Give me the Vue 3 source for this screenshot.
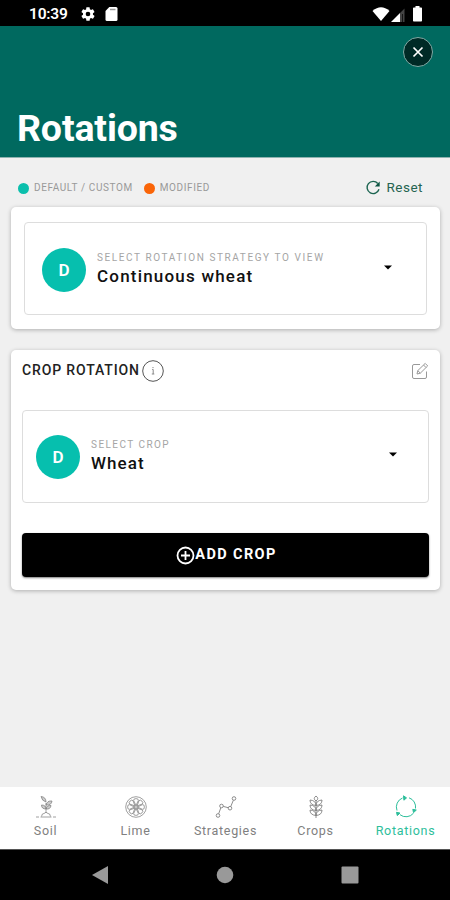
<script setup>
const tabs = [
  { id: 'soil', label: 'Soil' },
  { id: 'lime', label: 'Lime' },
  { id: 'strategies', label: 'Strategies' },
  { id: 'crops', label: 'Crops' },
  { id: 'rotations', label: 'Rotations' },
]
const active = 'rotations'
const spokes = [0, 45, 90, 135, 180, 225, 270, 315]
</script>

<template>
  <div class="screen">
    <div class="status">
      <span class="time">10:39</span>
      <svg class="gear" width="16" height="16" viewBox="0 0 24 24"><path fill="#fff" fill-rule="evenodd" d="M19.4 13a7.500 7.500 0 0 0 0-2l2.100-1.650c.2-.15.250-.42.120-.64l-2-3.460a.5.5 0 0 0-.61-.22l-2.500 1a7.300 7.300 0 0 0-1.700-.98l-.37-2.650A.5.500 0 0 0 14 2h-4a.5.5 0 0 0-.5.420l-.37 2.650c-.6.240-1.170.570-1.700.980l-2.500-1a.5.5 0 0 0-.6.220l-2 3.460c-.13.220-.08.490.12.640L4.570 11a7.900 7.900 0 0 0 0 2l-2.110 1.650a.5.5 0 0 0-.12.640l2 3.460c.12.220.380.300.600.220l2.500-1c.52.400 1.080.730 1.700.980l.37 2.650c.04.240.250.400.5.400h4c.25 0 .46-.16.500-.4l.37-2.650a7.300 7.300 0 0 0 1.700-.98l2.500 1c.23.080.480 0 .600-.22l2-3.460a.5.500 0 0 0-.12-.64zM12 15.500a3.500 3.500 0 1 1 0-7 3.500 3.500 0 0 1 0 7z" /></svg>
      <svg class="sd" width="13" height="16" viewBox="0 0 13 16"><path fill="#fff" d="M4.300 1H11q1.500 0 1.500 1.500v11q0 1.500-1.500 1.500H2Q.5 15 .5 13.500V5z" /><path d="M5 3.500h5.500" stroke="#999" stroke-width="1.500" /></svg>
      <svg class="signals" width="52" height="18" viewBox="0 0 52 18">
        <path fill="#fff" d="M.5 6Q9-1.500 17.500 6L9 16z" />
        <path fill="#fff" d="M19 17 28 8v9z" /><path fill="#444" d="m28 8 4.500-4.500V17h-1.800V9H30v8h-2z" />
        <path fill="#fff" d="M43.500 2.500V1h4v1.500h1.700q.8 0 .8.800v12.400q0 .8-.8.800h-7.400q-.8 0-.8-.8V3.300q0-.8.800-.8z" />
      </svg>
    </div>

    <header class="header">
      <button class="close" aria-label="Close"><svg width="12" height="12" viewBox="0 0 12 12"><path d="m1.500 1.500 9 9m0-9-9 9" stroke="#fff" stroke-width="1.700" /></svg></button>
      <h1>Rotations</h1>
    </header>

    <main class="content">
      <div class="legend">
        <i class="dot teal"></i><span class="key first">DEFAULT / CUSTOM</span>
        <i class="dot orange"></i><span class="key">MODIFIED</span>
        <button class="reset">
          <svg width="16" height="16" viewBox="0 0 16 16"><path d="M12.800 3.500A6.100 6.100 0 1 0 14 9.300" fill="none" stroke="#1b6450" stroke-width="1.400" /><path fill="#0b5442" d="M14.700 1.500v5H9.800z" /></svg>
          <span>Reset</span>
        </button>
      </div>

      <section class="card strategy">
        <div class="field">
          <span class="avatar">D</span>
          <div class="text"><span class="label strategy-label">SELECT ROTATION STRATEGY TO VIEW</span><span class="value">Continuous wheat</span></div>
          <svg class="caret" width="8" height="5" viewBox="0 0 8 5"><path d="M0 .5h8L4 4.500z" /></svg>
        </div>
      </section>

      <section class="card crop">
        <div class="card-head">
          <h2>CROP ROTATION</h2>
          <svg class="info" width="22" height="22" viewBox="0 0 22 22"><circle cx="11" cy="11" r="10.300" fill="none" stroke="#555" stroke-width="1" /><path d="M10.200 9.500h1v4.500M9.800 14h2.500" fill="none" stroke="#888" /><circle cx="11" cy="7.600" r=".7" fill="#888" /></svg>
          <svg class="edit" width="18" height="18" viewBox="0 0 18 18" fill="none" stroke="#999" stroke-width="1"><path d="M9 2.500H3Q1.500 2.500 1.500 4v11Q1.500 16.500 3 16.500h11q1.500 0 1.500-1.500V9.500" /><path d="m6 12 .8-3.400 7.400-7.200 2.500 2.500-7.400 7.300zM6.800 8.600l2.500 2.600M12.500 3l2.500 2.500" /></svg>
        </div>
        <div class="field">
          <span class="avatar">D</span>
          <div class="text"><span class="label crop-label">SELECT CROP</span><span class="value wheat">Wheat</span></div>
          <svg class="caret" width="8" height="5" viewBox="0 0 8 5"><path d="M0 .5h8L4 4.500z" /></svg>
        </div>
        <button class="add">
          <svg width="19" height="19" viewBox="0 0 19 19"><circle cx="9.500" cy="9.500" r="8" fill="none" stroke="#fff" stroke-width="1.800" /><path d="M9.500 5v9M5 9.500h9" stroke="#fff" stroke-width="1.800" /></svg>
          <span>ADD CROP</span>
        </button>
      </section>
    </main>

    <nav class="tabs">
      <div v-for="t in tabs" :key="t.id" class="tab" :class="{ active: t.id === active }">
        <svg width="24" height="24" viewBox="0 0 24 24" fill="none" stroke="currentColor" stroke-width="0.750">
          <g v-if="t.id === 'soil'">
            <path d="M2 22h3m1.500 0h11m1.500 0h3M7.500 21.500q.5-3.500 2.500-3 2-2.500 4 0 2-.5 2.500 3M12 18V8" />
            <path fill="currentColor" fill-opacity=".4" d="M12 7Q8 6 7 1.500q5 .5 5 5.500zM12 10q1-4.500 6-4-.5 4.500-6 4zM12 14q-4.500 0-4.500-4 4.500 0 4.500 4zM12 14q1-4 5-3.500-.5 4-5 3.500z" />
          </g>
          <g v-else-if="t.id === 'lime'">
            <circle cx="12" cy="12" r="10.300" />
            <path v-for="a in spokes" :key="a" :transform="`rotate(${a} 12 12)`" d="M12 10.500 9.700 5.600q-.5-2 2.300-2t2.300 2z" />
            <circle cx="12" cy="12" r="1.300" />
          </g>
          <g v-else-if="t.id === 'strategies'" stroke-width=".9">
            <circle cx="4" cy="20.500" r="1.800" /><circle cx="7.500" cy="11" r="1.800" /><circle cx="16" cy="13.200" r="1.800" /><circle cx="20" cy="3.500" r="1.800" />
            <path d="m4.700 18.700 2.100-5.900m2.500-1.400 4.900 1.300m2.600-1.300 2.500-6" />
          </g>
          <g v-else-if="t.id === 'crops'" stroke-width=".9">
            <path d="M12 5v18M12 6Q8.500 3.500 12 1q3.500 2.500 0 5zM12 10.500Q6 10 6 5q6 .5 6 5.500zm0 0Q18 10 18 5 12 5.500 12 10.500zM12 15.500Q6 15 6 10q6 .5 6 5.500zm0 0q6-.5 6-5.500-6 .5-6 5.500zM12 20.500Q6 20 6 15q6 .5 6 5.500zm0 0q6-.5 6-5.500-6 .5-6 5.500z" />
          </g>
          <g v-else stroke-width="1">
            <path d="M15 2.800A9.700 9.700 0 0 1 21.500 13.500M19.500 18.200A9.700 9.700 0 0 1 6 19.700M3 15.500A9.700 9.700 0 0 1 8.500 3" />
            <path fill="currentColor" d="m9.500.8 3 2.100-2.600 2.300zM18.800 14.300l3.500.8-2.800 2.500zM2.500 17.300l3.500.8-2.700 2.500z" />
          </g>
        </svg>
        <span>{{ t.label }}</span>
      </div>
    </nav>

    <div class="system">
      <svg width="18" height="20" viewBox="0 0 18 20"><path d="M1 10 17 1v18z" fill="#999" /></svg>
      <svg width="18" height="18" viewBox="0 0 18 18"><circle cx="9" cy="9" r="8.300" fill="#999" /></svg>
      <svg width="18" height="18" viewBox="0 0 18 18"><rect x=".5" y=".5" width="17" height="17" rx="1" fill="#999" /></svg>
    </div>
  </div>
</template>

<style>
body { margin: 0; }
</style>

<style scoped>
.screen { width: 450px; height: 900px; display: flex; flex-direction: column; background: #f0f0f0; font-family: Roboto, sans-serif; overflow: hidden; }
.screen * { box-sizing: border-box; }
button { border: 0; padding: 0; background: none; font: inherit; }
svg { display: block; flex: none; }
.status { height: 26px; background: #000; display: flex; align-items: center; padding: 2px 26px 0 29px; flex: none; }
.time { color: #fff; font-size: 15.500px; font-weight: 600; width: 51px; letter-spacing: -.2px; }
.sd { margin-left: 9px; }
.signals { margin-left: auto; }
.header { height: 132px; background: #00695f; display: flex; flex-direction: column; justify-content: space-between; padding: 11px 17px 7px; border-bottom: 1px solid #8fb3b0; flex: none; }
.close { width: 30px; height: 30px; border-radius: 50%; border: 1px solid #80aaa5; background: #002a26; align-self: flex-end; display: grid; place-items: center; }
h1 { margin: 0; color: #fff; font-size: 37.500px; line-height: 44px; font-weight: 700; letter-spacing: -.15px; }
.content { flex: 1; padding: 19px 10px 0 11px; }
.legend { display: flex; align-items: center; height: 20px; margin-bottom: 10px; padding: 0 17px 0 7px; }
.dot { width: 11px; height: 11px; border-radius: 50%; margin: 2px 5px 0 0; }
.teal { background: #0bbfac; }
.orange { background: #fa6508; }
.key { color: #999; font-size: 10px; letter-spacing: .6px; }
.first { margin-right: 11px; }
.reset { margin-left: auto; display: flex; align-items: center; gap: 5px; color: #256451; font-size: 13.500px; letter-spacing: .5px; }
.reset svg { margin-top: 2px; }
.card { background: #fff; border-radius: 5px; box-shadow: 0 1px 4px rgba(0, 0, 0, .28); }
.strategy { height: 122px; padding: 15px 13px; margin-bottom: 21px; }
.field { height: 93px; border: 1px solid #ddd; border-radius: 4px; display: flex; align-items: center; padding: 0 34px 0 17px; }
.avatar { width: 44px; height: 44px; border-radius: 50%; background: #06bfae; color: #fff; font-size: 17px; font-weight: 600; display: grid; place-items: center; margin: 2px 11px 0 0; }
.text { display: flex; flex-direction: column; padding-top: 1px; }
.label { color: #a5a5a5; font-size: 10px; line-height: 14px; }
.strategy-label { letter-spacing: 1.600px; }
.crop-label { letter-spacing: 1.450px; }
.value { color: #111; font-size: 17px; line-height: 23px; font-weight: 500; letter-spacing: 1.200px; }
.caret { margin: 0 0 2px auto; }
.crop { height: 240px; padding: 9px 11px 0; }
.card-head { display: flex; align-items: center; height: 24px; margin-bottom: 27px; }
h2 { margin: 0 2px 3px 0; font-size: 14px; font-weight: 500; color: #222; letter-spacing: .87px; }
.edit { margin-left: auto; }
.crop .field { padding: 0 31px 0 13px; }
.crop .avatar { margin: 0 11px 0 0; }
.crop .text { padding: 0 0 1px; }
.crop .value { letter-spacing: 1.100px; }
.crop .caret { margin-bottom: 4px; }
.add { width: 100%; height: 44px; margin-top: 30px; border-radius: 4px; background: #000; color: #fff; display: flex; align-items: center; justify-content: center; font-size: 14.500px; font-weight: 700; letter-spacing: 1.400px; padding-left: 2px; box-shadow: 0 1px 2px rgba(0, 0, 0, .5); }
.add span { padding-bottom: 1px; }
.tabs { height: 62px; background: #fff; display: grid; grid-template-columns: repeat(5, 1fr); flex: none; }
.tab { display: flex; flex-direction: column; align-items: center; padding: 8px 0 0 1px; color: #808080; font-size: 12.500px; letter-spacing: .7px; gap: 4px; }
.tab span { line-height: 15px; }
.tab.active { color: #2dbe9b; }
.system { height: 51px; background: #000; border-top: 1px solid #555; display: flex; align-items: center; justify-content: center; gap: 107px; flex: none; }
</style>
